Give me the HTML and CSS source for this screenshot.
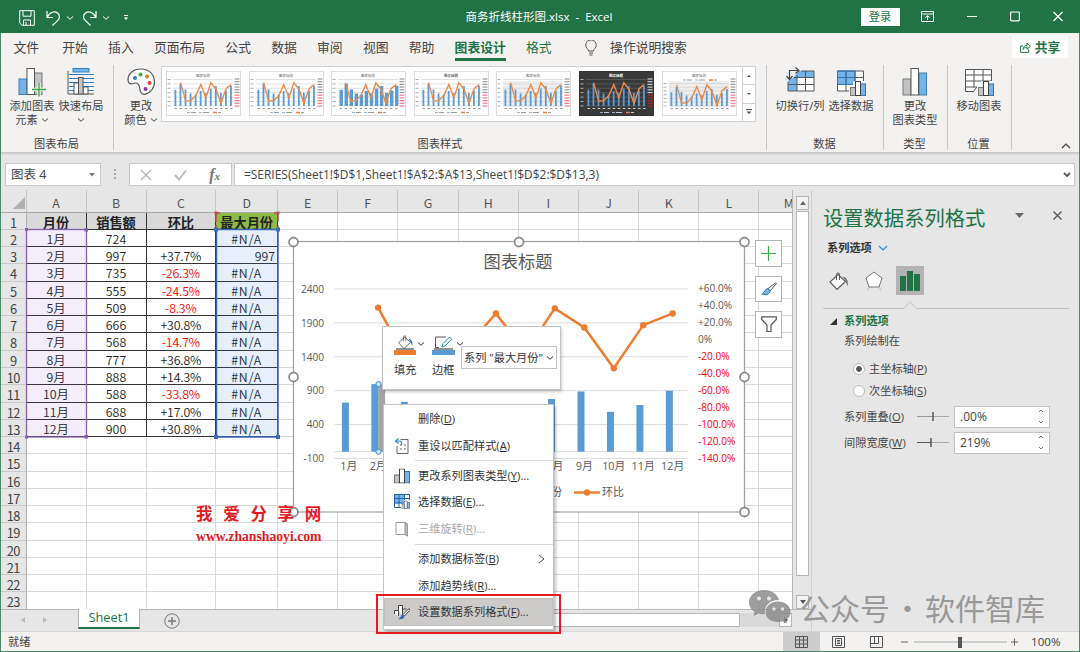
FILE: index.html
```
<!DOCTYPE html>
<html lang="zh-CN">
<head>
    <meta charset="UTF-8">
    <meta name="viewport" content="width=device-width, initial-scale=1.0">
    <title>商务折线柱形图.xlsx - Excel</title>
    <link rel="stylesheet" href="styles.css">
</head>
<body>
    <!-- shared icons -->
    <svg class="defs" width="0" height="0">
        <symbol id="i-chev" viewBox="0 0 8 6"><path d="M1 1.500l3 2.800 3-2.800" fill="none" stroke="currentColor" stroke-width="1"/></symbol>
        <symbol id="i-bars" viewBox="0 0 26 30">
            <rect x="1" y="12" width="8" height="16" fill="#c3c3c3" stroke="#777"/>
            <rect x="17" y="6" width="7.500" height="22" fill="#74b4e8" stroke="#3a7fba"/>
            <rect x="9" y="1.500" width="7.500" height="26.500" fill="#fff" stroke="#555"/>
        </symbol>
        <symbol id="i-minibars" viewBox="0 0 16 15">
            <rect x=".5" y="6.500" width="5" height="8" fill="#c3c3c3" stroke="#777"/>
            <rect x="10.500" y="3" width="5" height="11.500" fill="#74b4e8" stroke="#2f74b5"/>
            <rect x="5.500" y=".5" width="5" height="14" fill="#fff" stroke="#444"/>
        </symbol>
        <symbol id="i-bucket" viewBox="0 0 22 20">
            <path d="M10 3.500 2 11l7 7.500 8.500-8z" fill="#fff" stroke="#555" stroke-width="1.100"/>
            <path d="M8.500 9V3.500a1.500 1.500 0 0 1 3 0V9" fill="none" stroke="#555"/>
            <path d="M14.500 5.500c4 .5 6 4 5.500 9.500-1.500-2-2-4-3-6z" fill="currentColor"/>
        </symbol>
    </svg>

    <div class="window">
        <div class="titlebar">
            <div class="quick">
                <svg width="16" height="16" viewBox="0 0 16 16" fill="none" stroke="#fff"><path d="M.7.7h14.600v14.600H3L.7 13zM4 .7v5.500h8V.7M4.500 15.300V10h7v5.300M7 12v3"/></svg>
                <svg class="undo" width="15" height="16" viewBox="0 0 15 16" fill="none" stroke="#fff" stroke-width="1.200"><path d="M1 1v6.500h6M1.200 7.200C4 1.500 9 1 11.500 3s2.500 5 .5 7.200L6.500 15.500"/></svg>
                <svg class="qchev" width="8" height="6"><use href="#i-chev"/></svg>
                <svg class="redo" width="15" height="16" viewBox="0 0 15 16" fill="none" stroke="#fff" stroke-width="1.200"><path d="M14 1v6.500H8M13.800 7.200C11 1.500 6 1 3.500 3s-2.500 5-.5 7.200l5.500 5.300"/></svg>
                <svg class="qchev" width="8" height="6"><use href="#i-chev"/></svg>
                <svg class="more" width="6" height="7" viewBox="0 0 6 7"><path d="M1 1.500h4" stroke="#fff"/><path d="M.8 3.500h4.400L3 6z" fill="#fff"/></svg>
            </div>
            <div class="doc-title">商务折线柱形图.xlsx&nbsp; -&nbsp; Excel</div>
            <div class="win-btns">
                <span class="login">登录</span>
                <svg width="13" height="11" viewBox="0 0 13 11" fill="none" stroke="#fff"><path d="M.5.5h12v10H.5zM.5 3h12M6.500 9V4.800M4.300 6.700l2.200-2 2.200 2"/></svg>
                <svg width="10" height="11" viewBox="0 0 10 11" stroke="#fff"><path d="M0 5.500h10"/></svg>
                <svg width="10" height="11" viewBox="0 0 10 11" fill="none" stroke="#fff" stroke-width="1.200"><rect x=".6" y="1" width="8.800" height="8.800" rx="1"/></svg>
                <svg width="10" height="11" viewBox="0 0 10 11" stroke="#fff" stroke-width="1.200"><path d="M.5 1l9 9M9.500 1l-9 9"/></svg>
            </div>
        </div>

        <div class="tabs">
            <span class="tab file">文件</span>
            <span class="tab">开始</span>
            <span class="tab">插入</span>
            <span class="tab">页面布局</span>
            <span class="tab">公式</span>
            <span class="tab">数据</span>
            <span class="tab">审阅</span>
            <span class="tab">视图</span>
            <span class="tab">帮助</span>
            <span class="tab active">图表设计</span>
            <span class="tab green">格式</span>
            <svg class="bulb" width="12" height="16" viewBox="0 0 12 16" fill="none" stroke="#555"><path d="M3.500 11c0-2-2.800-3-2.800-5.800a5.200 5.200 0 0 1 10.600 0C11.300 8 8.500 9 8.500 11zM3.800 13h4.400M4.500 15h3"/></svg>
            <span class="tab search">操作说明搜索</span>
            <span class="share">
                <svg width="11" height="11" viewBox="0 0 11 11" fill="none" stroke="#217346"><path d="M3 4H.6v6.400h8V7.500M3 7.500C3 4.500 5 3.500 7 3.500V1l3.400 3.300L7 7.200V5.200c-2 0-3.200.8-4 2.300z"/></svg>
                共享
            </span>
        </div>

        <div class="ribbon">
            <div class="group g-layout">
                <div class="btns">
                    <div class="big">
                        <svg width="28" height="30" viewBox="0 0 28 30">
                            <rect x="1" y="12" width="8" height="15.500" fill="#74b4e8" stroke="#3a7fba"/>
                            <rect x="16" y="6" width="8" height="21.500" fill="#c3c3c3" stroke="#777"/>
                            <rect x="9" y="1.500" width="7.500" height="26" fill="#fff" stroke="#555"/>
                            <path d="M21 15.500v14M14 22.500h14" stroke="#f3f2f1" stroke-width="3.500"/>
                            <path d="M21 15.500v14M14 22.500h14" stroke="#3fa94d" stroke-width="1.400"/>
                        </svg>
                        <span>添加图表</span>
                        <span>元素 <svg width="8" height="6"><use href="#i-chev"/></svg></span>
                    </div>
                    <div class="big">
                        <svg width="28" height="30" viewBox="0 0 28 30">
                            <path d="M1 4v23h26" fill="none" stroke="#555"/>
                            <path d="M2 7.500h25M2 11.500h25M2 15.500h25M2 19.500h25M2 23.500h25" stroke="#2f80c3" stroke-width="1.200"/>
                            <rect x="6" y="1.500" width="16" height="3.500" fill="#74b4e8" stroke="#2f80c3"/>
                            <rect x="7" y="16" width="4.500" height="11" fill="#fff" stroke="#555"/>
                            <rect x="16" y="20" width="5" height="7" fill="#fff" stroke="#555"/>
                            <rect x="11.500" y="10.500" width="4.500" height="16.500" fill="#c3c3c3" stroke="#555"/>
                        </svg>
                        <span>快速布局</span>
                        <span><svg width="8" height="6"><use href="#i-chev"/></svg></span>
                    </div>
                </div>
                <div class="label">图表布局</div>
            </div>

            <div class="group g-style">
                <div class="btns">
                    <div class="big">
                        <svg width="28" height="30" viewBox="0 0 28 30">
                            <path d="M14 2C6 2 1 7 1 12.500c0 3.500 2 5 5 4 3.500-1.300 6 0 6.500 3.500.5 5 2 8 5.500 7.300 5-1 9.500-6 9.500-12.300C27.500 7.500 22 2 14 2z" fill="#fff" stroke="#555" stroke-width="1.200"/>
                            <circle cx="8" cy="11" r="2" fill="#2f80c3"/><circle cx="13.500" cy="7.500" r="2" fill="#3fa94d"/>
                            <circle cx="20" cy="9.500" r="2" fill="#e07f1c"/><circle cx="22.500" cy="16" r="2" fill="#e63b3b"/><circle cx="18.500" cy="22" r="2" fill="#8d2fb0"/>
                        </svg>
                        <span>更改</span>
                        <span>颜色 <svg width="8" height="6"><use href="#i-chev"/></svg></span>
                    </div>
                    <div class="gallery">
                        <div class="thumbs" id="thumbs"></div>
                        <div class="gal-nav">
                            <span><svg width="6" height="4" viewBox="0 0 6 4"><path d="M1 3h4L3 1z" fill="#555"/></svg></span>
                            <span><svg width="6" height="4" viewBox="0 0 6 4"><path d="M1 1h4L3 3z" fill="#555"/></svg></span>
                            <span><svg width="8" height="6" viewBox="0 0 8 6"><path d="M1 .5h6" stroke="#555"/><path d="M1.500 2.500h5L4 5z" fill="#555"/></svg></span>
                        </div>
                    </div>
                </div>
                <div class="label">图表样式</div>
            </div>

            <div class="group g-data">
                <div class="btns">
                    <div class="big">
                        <svg width="30" height="30" viewBox="0 0 30 30">
                            <path d="M14 4h15v20H3V14z" fill="#fff"/>
                            <path d="M14 4h15v6.500H8zM3 14l5-3.500h4V24H3z" fill="#74b4e8"/>
                            <path d="M16 4h13v20H3v-9M9 10.500h20M3 17.500h26M12 8v16M20.500 4v20" fill="none" stroke="#555"/>
                            <path d="M4.500 11.500V3.500H13M1.500 9l3 3.500 3-3.500M10.500.5l3.500 3-3.500 3" fill="none" stroke="#444" stroke-width="1.200"/>
                        </svg>
                        <span>切换行/列</span>
                    </div>
                    <div class="big">
                        <svg width="30" height="30" viewBox="0 0 30 30">
                            <rect x="1.500" y="4" width="26" height="20" fill="#fff"/>
                            <rect x="1.500" y="4" width="17.500" height="13.500" fill="#74b4e8"/>
                            <path d="M1.500 4h26v20h-26zM1.500 10.500h26M1.500 17.500h26M10 4v20M19 4v20" fill="none" stroke="#555"/>
                            <path d="M1.500 4H19v13.500H1.500zM10 4v13.500M1.500 10.500H19" fill="none" stroke="#2f74b5"/>
                            <path d="M13 19h4v-5h12v16H13z" fill="#f3f2f1"/>
                            <use href="#i-minibars" x="14" y="14" width="16" height="15"/>
                        </svg>
                        <span>选择数据</span>
                    </div>
                </div>
                <div class="label">数据</div>
            </div>

            <div class="group g-type">
                <div class="btns">
                    <div class="big">
                        <svg width="26" height="30"><use href="#i-bars"/></svg>
                        <span>更改</span>
                        <span>图表类型</span>
                    </div>
                </div>
                <div class="label">类型</div>
            </div>

            <div class="group g-pos">
                <div class="btns">
                    <div class="big">
                        <svg width="30" height="30" viewBox="0 0 30 30">
                            <path d="M1.500 2.500h26v18H12l-3 4H1.500z" fill="#fff"/>
                            <path d="M27.500 16V2.500h-26v22h8l3-4H16M1.500 8h26M1.500 14h26M1.500 20h15M10 2.500v18M19 2.500V15" fill="none" stroke="#555"/>
                            <path d="M13 19h4v-5h12v16H13z" fill="#f3f2f1"/>
                            <use href="#i-minibars" x="14" y="14" width="16" height="15"/>
                        </svg>
                        <span>移动图表</span>
                    </div>
                </div>
                <div class="label">位置</div>
            </div>
            <svg class="collapse" width="10" height="6" viewBox="0 0 10 6"><path d="M1 5l4-4 4 4" fill="none" stroke="#444" stroke-width="1.200"/></svg>
        </div>

        <div class="formula-bar">
            <div class="name-box">图表 4 <svg width="6" height="4" viewBox="0 0 6 4"><path d="M0 0h6L3 3.500z" fill="#777"/></svg></div>
            <svg class="dots" width="3" height="11" viewBox="0 0 3 11"><path d="M0 0h2v2H0zM0 4h2v2H0zM0 8h2v2H0z" fill="#aaa"/></svg>
            <div class="fx-box">
                <svg width="12" height="12" viewBox="0 0 12 12"><path d="M1 1l10 10M11 1L1 11" stroke="#bbb" stroke-width="1.500"/></svg>
                <svg width="13" height="12" viewBox="0 0 13 12"><path d="M1 6l4 4.500L12 1.500" fill="none" stroke="#bbb" stroke-width="2"/></svg>
                <span class="fx">f<small>x</small></span>
            </div>
            <div class="formula"><span>=SERIES(Sheet1!$D$1,Sheet1!$A$2:$A$13,Sheet1!$D$2:$D$13,3)</span>
                <svg width="8" height="6" viewBox="0 0 8 6"><path d="M1 1l3 3 3-3" fill="none" stroke="#555" stroke-width="1.800"/></svg>
            </div>
        </div>

        <div class="main">
            <div class="work">
                <div class="sheet-row">
                    <div class="grid" id="grid"></div>
                    <div class="vscroll">
                        <span class="sbtn"><svg width="6" height="4" viewBox="0 0 6 4"><path d="M0 4h6L3 0z" fill="#666"/></svg></span>
                        <span class="vthumb"></span>
                        <span class="sbtn"><svg width="6" height="4" viewBox="0 0 6 4"><path d="M0 0h6L3 4z" fill="#555"/></svg></span>
                    </div>
                </div>
                <div class="sheet-tabs">
                    <svg class="nav" width="26" height="8" viewBox="0 0 26 8"><path d="M4 1v6L0 4zM22 1v6l4-3z" fill="#bbb"/></svg>
                    <span class="sheet-tab">Sheet1</span>
                    <svg class="add" width="16" height="16" viewBox="0 0 16 16" fill="none" stroke="#777"><circle cx="8" cy="8" r="7.200"/><path d="M8 4v8M4 8h8" stroke-width="1.500"/></svg>
                    <div class="hscroll"><span class="hthumb"></span><span class="hbtn"><svg width="4" height="6" viewBox="0 0 4 6"><path d="M0 0v6l4-3z" fill="#444"/></svg></span></div>
                </div>
            </div>

            <div class="pane">
                <div class="pane-head">
                    <h2>设置数据系列格式</h2>
                    <svg class="drop" width="9" height="5" viewBox="0 0 9 5"><path d="M0 0h9L4.500 5z" fill="#666"/></svg>
                    <svg width="9" height="9" viewBox="0 0 9 9"><path d="M.5.5l8 8M8.500.5l-8 8" stroke="#555" stroke-width="1.300"/></svg>
                </div>
                <div class="pane-sub">系列选项 <svg width="10" height="7" viewBox="0 0 10 7"><path d="M1 1l4 4 4-4" fill="none" stroke="#2b8ccc" stroke-width="1.200"/></svg></div>
                <div class="pane-icons">
                    <svg class="gray" width="22" height="20"><use href="#i-bucket"/></svg>
                    <svg class="penta" width="18" height="20" viewBox="0 0 18 20"><path d="M9 1l8 6-3 9H4L1 7z" fill="#fff" stroke="#777"/><path d="M4 16l-2 3.500M14 16l2 3.500" stroke="#bbb"/></svg>
                    <span class="picked"><svg width="20" height="20" viewBox="0 0 20 20"><path d="M0 5h6v15H0zM7 0h6v20H7zM14 3h6v17h-6z" fill="#217346"/></svg></span>
                </div>
                <svg class="notch" width="246" height="10" viewBox="0 0 246 10"><path d="M0 8.500h81L87 1.500l6 7h153" fill="none" stroke="#c3c3c3"/></svg>
                <div class="sec"><svg width="7" height="7" viewBox="0 0 7 7"><path d="M7 0v7H0z" fill="#333"/></svg>系列选项</div>
                <div class="line">系列绘制在</div>
                <div class="radio"><i class="dot on"></i>主坐标轴(<u>P</u>)</div>
                <div class="radio second"><i class="dot"></i>次坐标轴(<u>S</u>)</div>
                <div class="slide">
                    <label>系列重叠(<u>O</u>)</label>
                    <svg width="32" height="11" viewBox="0 0 32 11"><path d="M0 5.500h32" stroke="#aaa"/><path d="M0 5.500h16" stroke="#999"/><path d="M16 1v9" stroke="#555" stroke-width="1.500"/></svg>
                    <span class="num">.00%<svg width="6" height="15" viewBox="0 0 6 15"><path d="M1 3l2-2 2 2M1 12l2 2 2-2" fill="none" stroke="#777"/></svg></span>
                </div>
                <div class="slide">
                    <label>间隙宽度(<u>W</u>)</label>
                    <svg width="32" height="11" viewBox="0 0 32 11"><path d="M0 5.500h32" stroke="#aaa"/><path d="M0 5.500h14" stroke="#555"/><path d="M14 1v9" stroke="#555" stroke-width="1.500"/></svg>
                    <span class="num">219%<svg width="6" height="15" viewBox="0 0 6 15"><path d="M1 3l2-2 2 2M1 12l2 2 2-2" fill="none" stroke="#777"/></svg></span>
                </div>
            </div>
        </div>

        <div class="status">
            <span class="ready">就绪</span>
            <span class="view on"><svg width="13" height="12" viewBox="0 0 13 12" fill="none" stroke="#555"><path d="M.5.5h12v11H.5zM.5 4h12M.5 8h12M4.500.5v11M8.500.5v11"/></svg></span>
            <span class="view"><svg width="13" height="12" viewBox="0 0 13 12" fill="none" stroke="#555"><path d="M.5.5h12v11H.5zM3.500 2.500h6v7h-6zM5 4.500h3M5 6h3M5 7.500h3"/></svg></span>
            <span class="view"><svg width="13" height="12" viewBox="0 0 13 12" fill="none" stroke="#555"><path d="M.5.5h12v11H.5zM.5 7.500h8V.5M4.500.5v7"/></svg></span>
            <svg class="zoom" width="119" height="14" viewBox="0 0 119 14"><path d="M1 7h7M111 7h7M114.500 3.500v7" stroke="#666"/><path d="M14 7h93" stroke="#aaa"/><rect x="58" y="2" width="4" height="11" fill="#555"/></svg>
            <span class="pct">100%</span>
        </div>
    </div>

    <!-- range markers of the selected series -->
    <svg class="ranges" width="262" height="236" viewBox="22 208 262 236">
        <rect x="26.500" y="229.500" width="60" height="207.500" fill="#7d3fc0" fill-opacity=".09" stroke="#8560b0" stroke-width="1.300"/>
        <rect x="216.500" y="229.500" width="61.500" height="207.500" fill="#2f7ee0" fill-opacity=".12" stroke="#3c6ab8" stroke-width="1.500"/>
        <path d="M216 222v-9h4M274 213h4v9M216 225v4M278 225v4" fill="none" stroke="#c0504d" stroke-width="1.500"/>
        <path d="M25 228h3v3h-3zM84.500 228h3.500v3.500h-3.500zM25 435.500h3v3h-3zM84.500 435h3.500v3.500h-3.500z" fill="#8560b0"/>
        <path d="M214 227.500h4v4h-4zM276 227.500h4v4h-4zM214 435h4v4h-4zM276 435h4v4h-4z" fill="#3c6ab8"/>
        <path d="M214.500 211.500h3v3h-3zM276.500 211.500h3v3h-3z" fill="#c0504d"/>
    </svg>

    <svg class="chart" id="chart" width="462" height="282" viewBox="288 236 462 282"></svg>

    <div class="chart-tools">
        <span><svg width="15" height="15" viewBox="0 0 15 15"><path d="M7.500 0v15M0 7.500h15" stroke="#3fa94d" stroke-width="1.200"/></svg></span>
        <span><svg width="16" height="14" viewBox="0 0 16 14"><path d="M14.800.8 7 6.500 9 9l6.500-7.500z" fill="#fff" stroke="#555"/><path d="M7 6.500C4 6.500 4.500 10 .8 12c4 1.500 8 .5 8.200-3z" fill="#74b4e8" stroke="#2f74b5"/></svg></span>
        <span><svg width="16" height="17" viewBox="0 0 16 17"><path d="M.7.800h14.600v2.700L10 9v6.500H6V9L.7 3.500z" fill="#fff" stroke="#555" stroke-width="1.200"/></svg></span>
    </div>

    <div class="stamp">
        <b>我爱分享网</b>
        <span>www.zhanshaoyi.com</span>
    </div>

    <div class="mini-bar">
        <div class="mini">
            <div><svg class="blue" width="22" height="24" viewBox="0 0 22 24"><use href="#i-bucket" x="3" y="-1" width="17" height="16"/><path d="M2 14h18" stroke="#222"/><path d="M0 15h22v5H0z" fill="#ed7d31"/></svg><svg class="c" width="8" height="6"><use href="#i-chev"/></svg></div>
            填充
        </div>
        <div class="mini">
            <div><svg width="23" height="24" viewBox="0 0 23 24"><path d="M14 2H3.500v10.500H7" fill="none" stroke="#555"/><path d="M10 12l1-3.500L17.500 2l2.200 2.200L13 11z" fill="#fff" stroke="#2b8ccc"/><path d="M2 14h19" stroke="#222"/><path d="M0 15h23v5H0z" fill="#5b9bd5"/></svg><svg class="c" width="8" height="6"><use href="#i-chev"/></svg></div>
            边框
        </div>
        <div class="series-box">系列 "最大月份"<svg width="8" height="6"><use href="#i-chev"/></svg></div>
    </div>

    <div class="menu">
        <div class="item">删除(<u>D</u>)</div>
        <div class="item"><svg width="15" height="17" viewBox="0 0 15 17"><path d="M6 1.500h7.500v14H2.500V8" fill="none" stroke="#666"/><path d="M5.500 7h2M9.500 7h2M5.500 11h2M9.500 11h2" stroke="#666"/><path d="M4 .5L1 3l3 2.500M1 3h3.500C7 3 7.500 5 7 7" fill="none" stroke="#2b8ccc" stroke-width="1.200"/></svg>重设以匹配样式(<u>A</u>)</div>
        <hr>
        <div class="item"><svg width="16" height="16" viewBox="0 0 16 15"><use href="#i-minibars" width="16" height="15"/></svg>更改系列图表类型(<u>Y</u>)...</div>
        <div class="item"><svg width="16" height="16" viewBox="0 0 16 16"><path d="M.5.5h15v13H.5z" fill="#fff"/><path d="M.5.5h10v9H.5z" fill="#74b4e8"/><path d="M.5.5h15v13H.5zM.5 4.500h15M.5 9h15M5 .5v13M10.500.5v13" fill="none" stroke="#24639c"/><path d="M7 10h3V6h6v10H7z" fill="#fff"/><use href="#i-minibars" x="7.500" y="6" width="8.500" height="9.500"/></svg>选择数据(<u>E</u>)...</div>
        <div class="item off"><svg width="14" height="16" viewBox="0 0 14 16"><path d="M1 1.500h9l2.500 1.500v12L10 13.500H1z" fill="#fff" stroke="#999"/><path d="M10 1.500v12l2.500 1.500V3z" fill="#bbb" stroke="#999"/></svg>三维旋转(<u>R</u>)...</div>
        <hr>
        <div class="item">添加数据标签(<u>B</u>)<svg class="sub" width="7" height="10" viewBox="0 0 7 10"><path d="M1 1l5 4-5 4" fill="none" stroke="#444"/></svg></div>
        <div class="item">添加趋势线(<u>R</u>)...</div>
        <div class="item hot"><svg width="16" height="16" viewBox="0 0 16 16"><path d="M.5 10V6.500h4V12M4.500 6.500v-5h4V12M8.500 5h4" fill="#fff" stroke="#444"/><path d="M15 4.500 9 10.500l1.500 1.500 5-5.500z" fill="#fff" stroke="#444"/><path d="M9 10.500c-2.500 0-1.500 3-5 4.500 3.500.8 6.500 0 6.500-3z" fill="#3c6ab8"/></svg>设置数据系列格式(<u>F</u>)...</div>
    </div>
    <div class="red-box"></div>

    <div class="watermark">
        <svg width="44" height="36" viewBox="0 0 44 36">
            <path d="M16 1C7 1 1 7 1 13.500c0 4 2 7 5.500 9.500L5.500 27l5-2.500c2 .5 4 .8 6.500.6C15.500 17 22 10.500 31 11 29.500 5 23.500 1 16 1z" fill="#8c8c8c"/>
            <path d="M30 12.500c-7 0-12.500 4.500-12.500 10.500S23 33 30 33c1.500 0 3-.2 4.500-.7L39 34.500l-1-3.700c3-2 4.500-4.500 4.500-7.800 0-6-5.500-10.500-12.500-10.500z" fill="#8c8c8c"/>
            <circle cx="11" cy="9.500" r="2" fill="#e6e6e6"/><circle cx="21" cy="9.500" r="2" fill="#e6e6e6"/><circle cx="26" cy="20" r="1.700" fill="#e6e6e6"/><circle cx="34.500" cy="20" r="1.700" fill="#e6e6e6"/>
        </svg>
        <span class="wm-a">公众号</span><span class="wm-b">·</span><span>软件智库</span>
    </div>
    <script src="script.js"></script>
</body>
</html>
```
FILE: styles.css
```
* {
    box-sizing: border-box;
}
body {
    margin: 0;
    width: 1080px;
    height: 652px;
    position: relative;
    overflow: hidden;
    font-family: "Open Sans", "Noto Sans CJK SC", sans-serif;
    font-size: 11.2px;
    line-height: 14px;
    color: #444;
    background: #e6e6e6;
}
svg {
    display: block;
    flex: none;
}
.defs {
    position: absolute;
}
u {
    text-underline-offset: 1px;
}
.window {
    width: 1080px;
    height: 652px;
    display: flex;
    flex-direction: column;
    border: solid #4a8867;
    border-width: 0 1px 1px;
}

/* title bar */
.titlebar {
    height: 33px;
    flex: none;
    margin: 0 -1px;
    background: #217346;
    color: #fff;
    display: grid;
    grid-template-columns: 380px 318px 382px;
    align-items: center;
}
.quick {
    display: flex;
    align-items: center;
    padding-left: 19px;
    padding-top: 2px;
}
.undo {
    margin-left: 11px;
}
.qchev {
    margin-left: 5px;
}
.redo {
    margin-left: 8px;
}
.more {
    margin-left: 13px;
}
.doc-title {
    text-align: center;
    font-size: 11.5px;
    white-space: nowrap;
}
.win-btns {
    display: flex;
    align-items: center;
    justify-content: flex-end;
    padding-right: 17px;
    gap: 33px;
}
.login {
    background: #fff;
    color: #217346;
    width: 39px;
    height: 18px;
    line-height: 18px;
    text-align: center;
    margin-right: -11.5px;
}

/* tabs */
.tabs {
    height: 31px;
    flex: none;
    background: #f3f2f1;
    display: flex;
    align-items: center;
    padding: 0 11px 2px 12.4px;
    gap: 20.25px;
    font-size: 12.8px;
}
.tab {
    line-height: 25px;
    height: 25px;
    white-space: nowrap;
}
.file {
    margin-right: 3px;
}
.active {
    color: #217346;
    font-weight: 700;
    border-bottom: 3px solid #217346;
    line-height: 20px;
    margin-top: 3px;
    height: 24px;
}
.green {
    color: #217346;
}
.bulb {
    margin-left: 13px;
    margin-right: -7px;
}
.share {
    margin-left: auto;
    width: 56px;
    height: 22px;
    background: #fff;
    border-radius: 2px;
    color: #217346;
    font-weight: 700;
    display: flex;
    align-items: center;
    justify-content: center;
    gap: 4px;
    margin-top: -1px;
}

/* ribbon */
.ribbon {
    height: 89px;
    flex: none;
    background: #f3f2f1;
    border-bottom: 1px solid #c9c9c9;
    box-shadow: 0 1px 2px rgba(0,0,0,0.15);
    display: flex;
    position: relative;
    z-index: 1;
}
.group {
    height: 85px;
    margin-top: 1px;
    border-right: 1px solid #c6c6c6;
    display: flex;
    flex-direction: column;
    justify-content: space-between;
}
.g-layout {
    width: 113px;
    padding-left: 7px;
}
.g-style {
    width: 653px;
    padding-left: 2px;
}
.g-data {
    width: 117px;
    padding-left: 8px;
}
.g-type {
    width: 64px;
    padding-left: 6px;
}
.g-pos {
    width: 64px;
    padding-left: 6px;
}
.btns {
    display: flex;
    gap: 1px;
}
.big {
    width: 50px;
    padding-top: 2px;
    display: flex;
    flex-direction: column;
    align-items: center;
    white-space: nowrap;
}
.g-layout .big {
    width: 48px;
}
.g-style .big {
    width: 50px;
    margin-right: -6px;
}
.big > svg {
    margin-bottom: 2px;
}
.big span {
    display: flex;
    align-items: center;
    gap: 3px;
    height: 14px;
    line-height: 14px;
}
.label {
    text-align: center;
    height: 14px;
    margin-bottom: -1px;
}
.g-style .label {
    padding-right: 2px;
}
.g-layout .label {
    padding-right: 8px;
}
.g-data .label {
    padding-right: 9px;
}
.g-type .label, .g-pos .label {
    padding-right: 8px;
}
.gallery {
    width: 595px;
    height: 56px;
    margin-top: 1px;
    background: #fff;
    border: 1px solid #d0d0d0;
    display: flex;
    justify-content: space-between;
}
.thumbs {
    display: flex;
    gap: 7.6px;
    padding: 4px 0 0 4px;
}
.gal-nav {
    width: 13px;
    border-left: 1px solid #d0d0d0;
    display: flex;
    flex-direction: column;
}
.gal-nav span {
    flex: 1;
    display: flex;
    align-items: center;
    justify-content: center;
}
.gal-nav span + span {
    border-top: 1px solid #d0d0d0;
}
.collapse {
    position: absolute;
    right: 8px;
    bottom: 3px;
}

/* formula bar */
.formula-bar {
    height: 37px;
    flex: none;
    display: flex;
    padding: 10px 4px 4px 4px;
    font-size: 12px;
}
.name-box, .fx-box, .formula {
    height: 23px;
    background: #fff;
    border: 1px solid #c9c9c9;
    display: flex;
    align-items: center;
    justify-content: space-between;
}
.name-box {
    width: 96px;
    padding: 0 5px 0 5px;
    font-size: 12.5px;
}
.dots {
    margin: 6px 13px 0 13px;
}
.fx-box {
    width: 103px;
    padding: 0 11px 0 10px;
    margin-right: 2px;
    margin-left: -1px;
}
.fx {
    font: italic 700 16px "Liberation Serif", serif;
    color: #777;
}
.fx small {
    font-size: 11px;
}
.formula {
    flex: 1;
    padding: 0 3px 0 9px;
    font-size: 11.95px;
}

/* sheet */
.main {
    flex: 1;
    display: flex;
    min-height: 0;
}
.work {
    width: 811px;
    border-right: 1px solid #d0d0d0;
    display: flex;
    flex-direction: column;
}
.sheet-row {
    height: 419px;
    display: flex;
    flex: none;
}
.grid {
    width: 792px;
    overflow: hidden;
    display: grid;
    grid-template-columns: 25.5px 60px 60px 69.7px 62px 60px 60.2px 60.2px 60.2px 60.2px 60.2px 60.2px 60px 60px;
    grid-template-rows: 22.6px repeat(23, 17.27px);
    background: #fff;
    font-family: "Noto Sans CJK SC", sans-serif;
    font-size: 12.4px;
    font-weight: 350;
    color: #222;
    border-right: 1px solid #b5b5b5;
}
.grid > div {
    border-right: 1px solid #d9d9d9;
    border-bottom: 1px solid #d9d9d9;
    text-align: center;
    padding-top: 1px;
    line-height: 17px;
    min-width: 0;
    white-space: nowrap;
}
.grid .col {
    background: #e6e6e6;
    border-right-color: #c4c4c4;
    border-bottom-color: #aaa;
    padding-top: 5px;
    font-weight: 400;
    color: #555;
}
.grid .rownum {
    background: #e6e6e6;
    border-right-color: #b0b0b0;
    border-bottom-color: #c9c9c9;
    font-size: 12.8px;
    font-weight: 400;
    color: #444;
    letter-spacing: -0.5px;
}
.grid .corner {
    display: flex;
    justify-content: flex-end;
    align-items: flex-end;
    padding: 0 1px 3px 0;
    border-right-color: #c4c4c4;
}
.grid .data {
    border-color: #333;
}
.grid .head {
    background: #d9d9d9;
    font-weight: 700;
    border-color: #333;
    font-size: 13.2px;
}
.grid .max {
    background: #8dbb46;
}
.grid .neg {
    color: #f00;
}
.grid .pc {
    letter-spacing: -0.2px;
}
.grid .na {
    letter-spacing: 0.9px;
}
.grid .right {
    text-align: right;
    padding-right: 2px;
}
.vscroll {
    width: 14px;
    margin-left: 3px;
    padding-top: 6px;
    display: flex;
    flex-direction: column;
}
.sbtn {
    width: 13px;
    height: 14px;
    flex: none;
    border: 1px solid #b5b5b5;
    background: #f3f3f3;
    display: flex;
    align-items: center;
    justify-content: center;
}
.vthumb {
    width: 13px;
    height: 366px;
    border: 1px solid #b5b5b5;
    background: #fff;
    margin-top: 1px;
    margin-bottom: 19px;
}
.sheet-tabs {
    flex: 1;
    border-top: 1px solid #b5b5b5;
    display: flex;
}
.nav {
    margin: 6px 0 0 20px;
}
.sheet-tab {
    width: 62px;
    height: 20px;
    margin: -1px 0 0 31px;
    background: #fff;
    border: solid #b5b5b5;
    border-width: 0 1px 0;
    border-bottom: 2px solid #217346;
    color: #217346;
    font-size: 12.8px;
    line-height: 17px;
    text-align: center;
}
.add {
    margin: 3px 0 0 24px;
}
.hscroll {
    margin: 3px 19px 0 auto;
    width: 340px;
    height: 14px;
    background: #dadada;
    display: flex;
    justify-content: space-between;
}
.hthumb {
    width: 288px;
    background: #fff;
    border: 1px solid #b5b5b5;
}
.hbtn {
    width: 13px;
    background: #f8f8f8;
    border: 1px solid #b5b5b5;
    display: flex;
    align-items: center;
    justify-content: center;
}

/* format pane */
.pane {
    flex: 1;
    padding: 17px 0 0 11px;
}
.pane-head {
    display: flex;
    align-items: center;
    height: 22px;
}
.pane-head h2 {
    margin: 0;
    font-size: 20.3px;
    font-weight: 400;
    line-height: 20px;
    color: #217346;
    width: 162px;
    white-space: nowrap;
}
.drop {
    margin: -5px 34px 0 30px;
}
.drop + svg {
    margin: -5px 0 0 -5px;
}
.pane-sub {
    display: flex;
    align-items: center;
    gap: 6px;
    margin: 12px 0 0 4px;
    font-weight: 700;
    color: #333;
}
.pane-icons {
    display: flex;
    align-items: center;
    margin: 11px 0 0 5px;
}
.gray {
    color: #777;
}
.penta {
    margin: 0 13px 0 15px;
}
.picked {
    width: 28px;
    height: 29px;
    background: #b3b3b3;
    display: flex;
    align-items: center;
    justify-content: center;
}
.notch {
    margin-top: 5px;
}
.sec {
    display: flex;
    align-items: center;
    gap: 7px;
    margin: 4px 0 0 7px;
    font-weight: 700;
    color: #217346;
}
.line {
    margin: 6px 0 0 21px;
}
.radio {
    display: flex;
    align-items: center;
    margin: 13.5px 0 0 30px;
}
.second {
    margin-top: 8.5px;
}
.dot {
    width: 12px;
    height: 12px;
    border-radius: 50%;
    background: #fff;
    border: 1px solid #bbb;
    margin-right: 4px;
}
.on.dot {
    background: radial-gradient(circle, #555 2.5px, #fff 3.2px);
}
.slide {
    display: flex;
    align-items: center;
    height: 22px;
    margin: 7.5px 0 0 21px;
}
.slide + .slide {
    margin-top: 4px;
}
.slide label {
    width: 73px;
}
.num {
    width: 96px;
    height: 22px;
    margin-left: 5px;
    background: #fff;
    border: 1px solid #c3c3c3;
    padding: 0 5px;
    display: flex;
    align-items: center;
    justify-content: space-between;
    font-size: 12px;
}

/* status bar */
.status {
    height: 20px;
    flex: none;
    background: #f3f2f1;
    border-top: 1px solid #d6d6d6;
    display: flex;
    align-items: center;
}
.ready {
    margin: 0 auto 0 7px;
}
.view {
    width: 37.5px;
    height: 19px;
    display: flex;
    align-items: center;
    justify-content: center;
}
.view.on {
    background: #cdcdcd;
}
.zoom {
    margin-left: 5px;
}
.pct {
    width: 30px;
    margin: 0 18px 0 12px;
    font-size: 11.6px;
}

/* floating parts over the sheet */
.ranges {
    position: absolute;
    left: 22px;
    top: 208px;
}
.chart {
    position: absolute;
    left: 288px;
    top: 236px;
    font-family: "Open Sans", "Noto Sans CJK SC", sans-serif;
    font-size: 10.1px;
}
.chart-tools {
    position: absolute;
    left: 755px;
    top: 240px;
    display: flex;
    flex-direction: column;
    gap: 9px;
}
.chart-tools span {
    width: 27px;
    height: 26.6px;
    background: #fff;
    border: 1px solid #b5b5b5;
    display: flex;
    align-items: center;
    justify-content: center;
}
.stamp {
    position: absolute;
    left: 196px;
    top: 503px;
    color: #e41b23;
    white-space: nowrap;
}
.stamp b {
    display: block;
    font-size: 16.5px;
    line-height: 20px;
    letter-spacing: 10.7px;
    font-family: "Noto Sans CJK SC", sans-serif;
}
.stamp span {
    display: block;
    font: bold 13.7px/16px "Liberation Serif", serif;
    margin-top: 6px;
}
.mini-bar {
    position: absolute;
    left: 382px;
    top: 326px;
    width: 179px;
    height: 64px;
    background: #fff;
    border: 1px solid #c3c3c3;
    box-shadow: 1px 2px 3px rgba(0,0,0,0.2);
    display: flex;
    padding: 8px 0 0 11px;
    color: #333;
}
.mini {
    width: 38px;
}
.mini div {
    display: flex;
    align-items: flex-start;
    height: 28px;
}
.mini .c {
    margin: 6px 0 0 1px;
}
.blue {
    color: #2f74b5;
}
.series-box {
    width: 96px;
    height: 23px;
    margin: 11px 0 0 -9px;
    border: 1px solid #c3c3c3;
    display: flex;
    align-items: center;
    justify-content: space-between;
    padding: 0 2px;
    white-space: nowrap;
}
.menu {
    position: absolute;
    left: 383px;
    top: 404px;
    width: 171px;
    height: 226px;
    padding-top: 0.9px;
    background: #fff;
    border: 1px solid #c3c3c3;
    box-shadow: 2px 2px 3px rgba(0,0,0,0.25);
    color: #333;
}
.item {
    height: 26.8px;
    display: flex;
    align-items: center;
    padding-left: 34px;
    white-space: nowrap;
}
.item > svg:first-child {
    margin: 0 8px 0 -24px;
    width: 16px;
}
.item .sub {
    margin: 0 8px 0 auto;
}
.menu hr {
    margin: 1px 0 0.8px 31px;
    border: 0;
    border-top: 1px solid #dcdcdc;
}
.off {
    color: #aaa;
}
.hot {
    background: #cdcbca;
    height: 28px;
    border: 1px solid #c0c0c0;
    padding-left: 33px;
    margin-top: -0.6px;
}
.red-box {
    position: absolute;
    left: 376px;
    top: 594px;
    width: 185px;
    height: 40px;
    border: 2px solid #e41b23;
}
.watermark {
    position: absolute;
    left: 748px;
    top: 589px;
    display: flex;
    align-items: center;
    font-size: 30px;
    line-height: 36px;
    color: #8c8c8c;
    opacity: 0.85;
    white-space: nowrap;
    font-family: "Noto Sans CJK SC", sans-serif;
}
.wm-a {
    margin-left: 8px;
}
.wm-b {
    width: 35px;
    text-align: center;
}
```
FILE: script.js
```
const months = ['1月', '2月', '3月', '4月', '5月', '6月', '7月', '8月', '9月', '10月', '11月', '12月'];
const sales = [724, 997, 735, 555, 509, 666, 568, 777, 888, 588, 688, 900];
const ratio = [null, 37.7, -26.3, -24.5, -8.3, 30.8, -14.7, 36.8, 14.3, -33.8, 17.0, 30.8];

function pct(v) {
    return (v > 0 ? '+' : '') + v.toFixed(1) + '%';
}

// Worksheet cells
function buildGrid() {
    let html = '<div class="col corner"><svg width="12" height="12" viewBox="0 0 12 12"><path d="M12 0v12H0z" fill="#b0b0b0"/></svg></div>';
    for (const c of 'ABCDEFGHIJKLM') html += `<div class="col">${c}</div>`;
    for (let r = 1; r <= 23; r++) {
        html += `<div class="rownum">${r}</div>`;
        for (let c = 0; c < 13; c++) {
            let cls = '', text = '';
            if (r === 1 && c < 4) {
                cls = 'head' + (c === 3 ? ' max' : '');
                text = ['月份', '销售额', '环比', '最大月份'][c];
            } else if (r <= 13 && c < 4) {
                const i = r - 2;
                cls = 'data';
                if (c === 0) text = months[i];
                if (c === 1) text = sales[i];
                if (c === 2 && ratio[i] !== null) {
                    text = pct(ratio[i]);
                    cls += ratio[i] < 0 ? ' pc neg' : ' pc';
                }
                if (c === 3) {
                    text = i === 1 ? 997 : '#N/A';
                    cls += i === 1 ? ' right' : ' na';
                }
            }
            html += `<div class="${cls}">${text}</div>`;
        }
    }
    document.getElementById('grid').innerHTML = html;
}

// Combo chart
function buildChart() {
    const x = i => 348.7 + 29.45 * i;
    const yBar = v => 451.7 - v * 0.0678;
    const yPct = v => 339.6 - v * 0.849;
    let s = '<rect x="293.5" y="241.5" width="451" height="270.5" fill="#fff" stroke="#a0a0a0" stroke-width="1.2"/>';
    s += '<text x="518" y="268" font-size="17.3" text-anchor="middle" fill="#595959">图表标题</text>';
    for (const v of [2400, 1900, 1400, 900, 400, -100]) {
        const y = yBar(v);
        s += `<path d="M334.500 ${y}H688" stroke="#dcdcdc"/><text x="324" y="${y + 3.8}" text-anchor="end" fill="#595959">${v}</text>`;
    }
    s += '<path d="M334.500 451.700H688" stroke="#dcdcdc"/>';
    for (let v = 60; v >= -140; v -= 20) {
        s += `<text x="698" y="${yPct(v) + 3.8}" fill="${v < 0 ? '#f00' : '#595959'}">${v ? pct(v) : '0%'}</text>`;
    }
    months.forEach((m, i) => {
        const y = yBar(sales[i]);
        s += `<rect x="${x(i) - 6.8}" y="${y}" width="7" height="${451.7 - y}" fill="#5b9bd5"/>`;
        // labels 3 to 7 lie fully behind the menu
        if (i < 2 || i > 6) s += `<text x="${x(i)}" y="470" font-size="10.800" text-anchor="middle" fill="#595959">${m}</text>`;
    });
    s += `<rect x="${x(1)}" y="${yBar(997)}" width="7" height="67.600" fill="#a5a5a5"/>`;
    const pts = ratio.map((v, i) => v === null ? null : [x(i), yPct(v)]).filter(Boolean);
    s += `<polyline points="${pts.join(' ')}" fill="none" stroke="#ed7d31" stroke-width="2.5"/>`;
    for (const p of pts) s += `<circle cx="${p[0]}" cy="${p[1]}" r="3.200" fill="#ed7d31"/>`;
    for (const y of [384, 451.7]) s += `<circle cx="378.500" cy="${y}" r="2.600" fill="#cfe5f7" stroke="#3d8fcf"/>`;
    s += '<text x="562" y="495.500" text-anchor="end" font-size="11" fill="#595959">最大月份</text>';
    s += '<path d="M574 492.500h26" stroke="#ed7d31" stroke-width="2.400"/><circle cx="587" cy="492.500" r="3.200" fill="#ed7d31"/>';
    s += '<text x="602" y="495.500" font-size="11" fill="#595959">环比</text>';
    for (const [cx, cy] of [[293.5, 242], [519, 242], [744.5, 242], [293.5, 377], [744.5, 377], [293.5, 512], [744.5, 512]]) {
        s += `<circle cx="${cx}" cy="${cy}" r="4.500" fill="#fff" stroke="#8f8f8f" stroke-width="1.800"/>`;
    }
    document.getElementById('chart').innerHTML = s;
}

// Style gallery previews
function buildThumbs() {
    let html = '';
    for (let k = 0; k < 7; k++) {
        const dark = k === 5;
        const low = k === 6 ? 4 : 0;
        const fg = dark ? '#ccc' : '#999';
        const bw = k === 2 ? 3.4 : 1.8;
        let s = `<rect x=".5" y=".5" width="74" height="44" fill="${dark ? '#3a3a3a' : '#fff'}" stroke="${dark ? '#333' : '#dcdcdc'}"/>`;
        if (k === 4 || k === 6) s += '<rect x="7" y="10" width="60" height="26" fill="#eee"/>';
        s += `<text x="37" y="5.500" font-size="3.500" text-anchor="middle" font-weight="${k === 3 || dark ? 700 : 400}" fill="${dark ? '#fff' : '#666'}">图表标题</text>`;
        for (let j = 0; j < 7; j++) s += `<path d="M7 ${8.5 + low + j * (26.4 - low) / 6}h60" stroke="${dark ? '#666' : '#ccc'}" stroke-width=".6"/><path d="M1.500 ${8.5 + low + j * (26.4 - low) / 6}h3" stroke="${fg}" stroke-width=".8"/>`;
        for (let j = 0; j < 11; j++) s += `<path d="M68.500 ${8 + j * 2.7}h5" stroke="${j > 5 ? (dark ? '#a22' : '#f78') : fg}" stroke-width="1.200"/>`;
        sales.forEach((v, i) => {
            const h = v * (k === 6 ? 0.019 : 0.0225);
            s += `<rect x="${8.5 + i * 5.05}" y="${35 - h}" width="${bw}" height="${h}" fill="#5b9bd5"/>`;
        });
        const pts = ratio.slice(1).map((v, i) => `${14.6 + i * 5.05},${(22.5 + low / 2 - v * 0.29).toFixed(1)}`).join(' ');
        s += `<polyline points="${pts}" fill="none" stroke="#ed8a48" stroke-width="1.400"/>`;
        s += `<path d="M8.500 37.500h58" stroke="${fg}" stroke-width="1.200" stroke-dasharray="2.500 2.550"/>`;
        const ly = k === 6 ? 9 : 41.5;
        s += `<path d="M21 ${ly}h3M33 ${ly}h3" stroke="#8ab8e0" stroke-width="1.200"/><path d="M25 ${ly}h5M37 ${ly}h6M52 ${ly}h3" stroke="${fg}" stroke-width="1.200"/><path d="M47 ${ly}h4" stroke="#ed7d31" stroke-width="1.500"/>`;
        html += `<svg width="75" height="45" viewBox="0 0 75 45">${s}</svg>`;
    }
    document.getElementById('thumbs').innerHTML = html;
}

buildGrid();
buildChart();
buildThumbs();
```
